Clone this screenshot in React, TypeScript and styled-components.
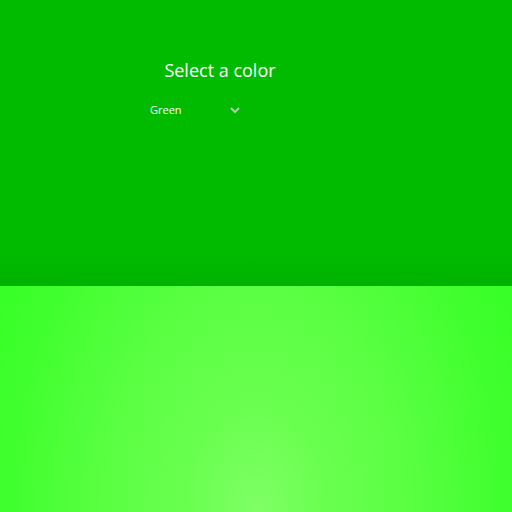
import styled, { createGlobalStyle } from 'styled-components';

const GlobalStyle = createGlobalStyle`
  html, body {
    margin: 0;
    padding: 0;
    height: 100%;
  }
  body {
    font-family: 'Open Sans', 'Noto Sans', sans-serif;
  }
  #root {
    height: 100%;
  }
`;

const Page = styled.div`
  display: flex;
  flex-direction: column;
  height: 512px;
  width: 512px;
`;

const TopPanel = styled.section`
  height: 286px;
  background: linear-gradient(to bottom, #00bb00 0%, #00bb00 88%, #00b200 100%);
  display: flex;
  padding-top: 58px;
  padding-left: 140px;
  box-sizing: border-box;
`;

const Picker = styled.div`
  width: 160px;
  display: flex;
  flex-direction: column;
`;

const Title = styled.h1`
  margin: 0;
  font-size: 18px;
  font-weight: 400;
  color: #ffffff;
  text-align: center;
  line-height: 25px;
`;

const SelectRow = styled.div`
  display: flex;
  align-items: center;
  justify-content: space-between;
  width: 91px;
  margin-top: 16px;
  padding-left: 10px;
  height: 20px;
  cursor: pointer;
`;

const SelectValue = styled.span`
  font-size: 11px;
  color: #ffffff;
`;

const Chevron = styled.svg`
  width: 12px;
  height: 12px;
  margin-top: 2px;
`;

const Backdrop = styled.section`
  flex: 1;
  background: radial-gradient(
    320px 480px at 50% 100%,
    #80ff66 0%,
    #6aff50 22%,
    #5cff44 45%,
    #40ff2e 78%,
    #33ff22 100%
  );
`;

const App = () => (
  <Page>
    <GlobalStyle />
    <TopPanel>
      <Picker>
        <Title>Select a color</Title>
        <SelectRow>
          <SelectValue>Green</SelectValue>
          <Chevron viewBox="0 0 12 12" fill="none">
            <path d="M2 4 L6 8 L10 4" stroke="#b0ccb0" strokeWidth="2" />
          </Chevron>
        </SelectRow>
      </Picker>
    </TopPanel>
    <Backdrop />
  </Page>
);

export default App;
